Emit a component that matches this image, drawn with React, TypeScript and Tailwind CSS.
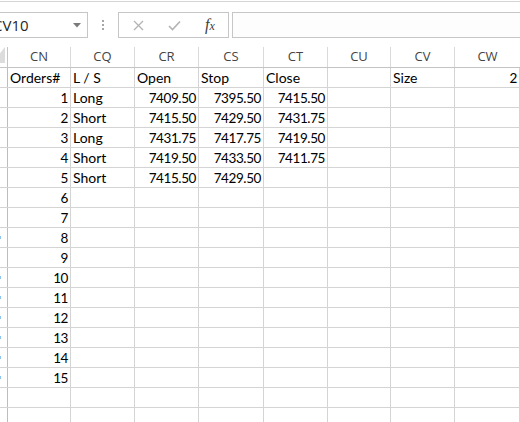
import React from "react";

type Cell = { v: string; right?: boolean };

const cols = [
  { name: "CN", w: "w-[63px]" },
  { name: "CQ", w: "w-[64px]" },
  { name: "CR", w: "w-[64px]" },
  { name: "CS", w: "w-[65px]" },
  { name: "CT", w: "w-[64px]" },
  { name: "CU", w: "w-[63px]" },
  { name: "CV", w: "w-[64px]" },
  { name: "CW", w: "w-[65px]" },
];

const L = (v: string): Cell => ({ v });
const R = (v: string): Cell => ({ v, right: true });
const E: Cell = { v: "" };

const trades: [string, string, string, string, string][] = [
  ["1", "Long", "7409.50", "7395.50", "7415.50"],
  ["2", "Short", "7415.50", "7429.50", "7431.75"],
  ["3", "Long", "7431.75", "7417.75", "7419.50"],
  ["4", "Short", "7419.50", "7433.50", "7411.75"],
  ["5", "Short", "7415.50", "7429.50", ""],
];

const rows: Cell[][] = [
  [L("Orders#"), L("L / S"), L("Open"), L("Stop"), L("Close"), E, L("Size"), R("2")],
  ...trades.map(([n, side, open, stop, close]) => [
    R(n),
    L(side),
    R(open),
    R(stop),
    R(close),
    E,
    E,
    E,
  ]),
  ...Array.from({ length: 10 }, (_, i) => [R(String(i + 6)), E, E, E, E, E, E, E]),
  [E, E, E, E, E, E, E, E],
  [E, E, E, E, E, E, E, E],
];

// rows whose clipped row-number shows a sliver at the window edge
const sliverRows = new Set([9, 11, 12, 13, 14, 15, 16]);

export default function App() {
  return (
    <div className="w-[520px] h-[422px] overflow-hidden bg-white relative font-['Open_Sans',sans-serif]">
      {/* ribbon edge */}
      <div className="h-px" />
      <div className="h-px bg-[#d5d5d5]" />
      <div className="h-[10px]" />

      {/* formula bar */}
      <div className="flex h-[26px] items-stretch">
        <div className="ml-[-12px] w-[100px] border border-[#c6c6c6] bg-white flex items-center pl-[4px] relative overflow-hidden">
          <span className="text-[15px] text-[#262626] leading-none font-['Open_Sans',sans-serif]">CV10</span>
          <svg className="absolute right-[6px] top-[10px]" width="8" height="5" viewBox="0 0 8 5">
            <polygon points="0,0 8,0 4,4.5" fill="#7a7a7a" />
          </svg>
        </div>
        <div className="w-[30px] flex flex-col items-center justify-center gap-[2px]">
          <div className="w-[2px] h-[2px] bg-[#a6a6a6]" />
          <div className="w-[2px] h-[2px] bg-[#a6a6a6]" />
          <div className="w-[2px] h-[2px] bg-[#a6a6a6]" />
        </div>
        <div className="w-[111px] border border-[#c6c6c6] bg-white flex items-center">
          <div className="w-[37px] flex justify-center pl-[1px]">
            <svg width="11" height="11" viewBox="0 0 11 11">
              <path d="M1 1 L10 10 M10 1 L1 10" stroke="#b3b3b3" strokeWidth="1.3" fill="none" />
            </svg>
          </div>
          <div className="w-[36px] flex justify-center">
            <svg width="13" height="11" viewBox="0 0 13 11">
              <path d="M1 6 L4.5 9.5 L12 1.5" stroke="#b3b3b3" strokeWidth="1.6" fill="none" />
            </svg>
          </div>
          <div className="w-[36px] flex justify-center">
            <span className="font-['Liberation_Serif',serif] italic text-[16px] text-[#404040] leading-none">
              f<span className="text-[12px]">x</span>
            </span>
          </div>
        </div>
        <div className="ml-[3px] flex-1 border-y border-l border-[#c6c6c6] bg-[#fdfdfd]" />
      </div>

      <div className="h-[9px]" />

      {/* column headers */}
      <div className="flex h-[21px] border-b border-[#c4c4c4]">
        <div className="w-[8px] border-r border-[#c4c4c4] relative overflow-hidden">
          <svg className="absolute left-0 top-[-2px]" width="7" height="20" viewBox="0 0 7 20">
            <polygon points="-8,18 5,18 5,2" fill="#dcdcdc" />
          </svg>
        </div>
        {cols.map((c, i) => (
          <div
            key={c.name}
            className={`${c.w} ${i < cols.length - 1 ? "border-r border-[#dadada]" : ""} flex items-center justify-center text-[13px] text-[#444444] leading-none pb-[1px]`}
          >
            {c.name}
          </div>
        ))}
      </div>

      {/* sheet body */}
      <div className="font-['Lato',sans-serif] text-[14px] text-black">
        {rows.map((r, ri) => (
          <div key={ri} className="flex h-[20px] border-b border-[#d4d4d4]">
            <div className="w-[8px] border-r border-[#bdbdbd] relative">
              {sliverRows.has(ri + 1) && (
                <div className="absolute left-0 top-[8px] w-px h-[3px] bg-[#8ec3ee]" />
              )}
            </div>
            {r.map((cell, ci) => (
              <div
                key={ci}
                className={`${cols[ci].w} border-r border-[#d4d4d4] flex items-end leading-none pb-[2px] overflow-visible whitespace-nowrap ${
                  cell.right ? "justify-end pr-[2px] text-[13.5px] tracking-[-0.4px]" : "justify-start pl-[2px]"
                }`}
              >
                {cell.v}
              </div>
            ))}
          </div>
        ))}
      </div>
    </div>
  );
}
